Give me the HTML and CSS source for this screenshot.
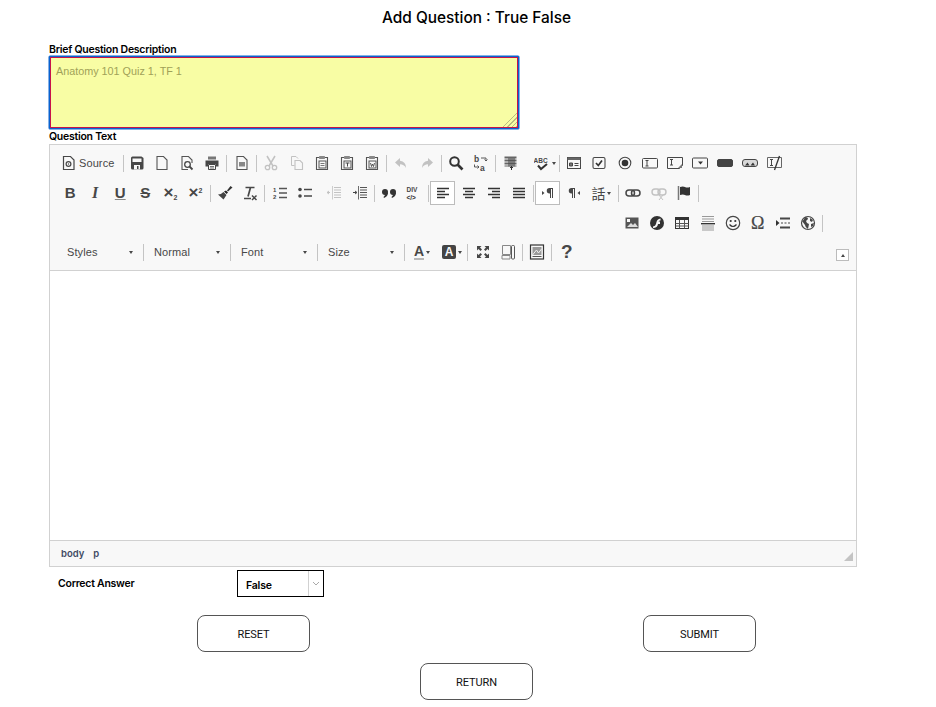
FILE: index.html
```html
<!DOCTYPE html>
<html lang="en">
<head>
<meta charset="utf-8">
<title>Add Question : True False</title>
<link rel="stylesheet" href="styles.css">
</head>
<body>
<svg class="defs" xmlns="http://www.w3.org/2000/svg">
<symbol id="source" viewBox="0 0 16 16"><path d="M2.500 1.500h7l3.500 3.500v9.500H2.500z" fill="none" stroke="#474747" stroke-width="1.200"/><circle cx="7.500" cy="9" r="2.400" fill="none" stroke="#474747" stroke-width="1.200"/><circle cx="7.500" cy="9" r=".7" fill="#474747"/></symbol>
<symbol id="save" viewBox="0 0 16 16"><path d="M2 3q0-1.500 1.500-1.500h9L14.500 3v10q0 1.500-1.500 1.500H3.500Q2 14.500 2 13z" fill="#474747"/><rect x="3.500" y="3.500" width="9" height="3.500" fill="#f8f8f8"/><rect x="5" y="10" width="6" height="4.500" fill="#f8f8f8"/><rect x="8" y="11" width="1.500" height="3" fill="#474747"/></symbol>
<symbol id="new" viewBox="0 0 16 16"><path d="M3 1.500h6.500L13 5v9.500H3z" fill="none" stroke="#555" stroke-width="1.100"/></symbol>
<symbol id="preview" viewBox="0 0 16 16"><path d="M9 14.500H3v-13h6.500L13 5v3" fill="none" stroke="#555" stroke-width="1.100"/><circle cx="8.500" cy="9.500" r="2.800" fill="none" stroke="#474747" stroke-width="1.300"/><path d="M10.500 11.500l3 3" stroke="#474747" stroke-width="1.800"/></symbol>
<symbol id="print" viewBox="0 0 16 16"><path d="M4 1.500h8v3H4z" fill="#777"/><path d="M1.500 5.500h13v6H12V9H4v2.500H1.500z" fill="#474747"/><path d="M4.500 9.500h7v5h-7z" fill="#f8f8f8" stroke="#474747"/><path d="M6 11.500h4M6 13h4" stroke="#777"/></symbol>
<symbol id="templates" viewBox="0 0 16 16"><path d="M3 1.500h6.500L13 5v9.500H3z" fill="none" stroke="#555" stroke-width="1.100"/><rect x="5" y="7" width="6" height="4.500" fill="#888"/></symbol>
<symbol id="cut" viewBox="0 0 16 16"><path d="M4 1l6 10M12 1L6 11" stroke="#474747" stroke-width="1.500"/><circle cx="4.500" cy="12.500" r="2.200" fill="none" stroke="#474747" stroke-width="1.300"/><circle cx="11.500" cy="12.500" r="2.200" fill="none" stroke="#474747" stroke-width="1.300"/></symbol>
<symbol id="copy" viewBox="0 0 16 16"><path d="M2.500 1.500H7l2 2M2.500 1.500v9h3" fill="none" stroke="#474747"/><path d="M6 5.500h5l2.500 2.500v6.500H6z" fill="none" stroke="#474747" stroke-width="1.100"/></symbol>
<symbol id="paste" viewBox="0 0 16 16"><path d="M5 2.500H2.500v12h11v-12H11" fill="none" stroke="#555" stroke-width="1.100"/><rect x="5" y="1" width="6" height="3" rx=".7" fill="#888"/><rect x="5" y="6" width="7" height="7" fill="none" stroke="#555"/><path d="M6.500 8.500h4M6.500 10.500h4" stroke="#777"/></symbol>
<symbol id="pastetext" viewBox="0 0 16 16"><path d="M5 2.500H2.500v12h11v-12H11" fill="none" stroke="#555" stroke-width="1.100"/><rect x="5" y="1" width="6" height="3" rx=".7" fill="#888"/><rect x="5" y="6" width="7" height="7" fill="none" stroke="#555"/><path d="M6.500 8h4M8.500 8v3.500" stroke="#474747"/></symbol>
<symbol id="pasteword" viewBox="0 0 16 16"><path d="M5 2.500H2.500v12h11v-12H11" fill="none" stroke="#555" stroke-width="1.100"/><rect x="5" y="1" width="6" height="3" rx=".7" fill="#888"/><rect x="5" y="6" width="7" height="7" fill="none" stroke="#555"/><path d="M6.500 8l1 3.500 1-2.500 1 2.500 1-3.500" fill="none" stroke="#474747" stroke-width=".9"/></symbol>
<symbol id="undo" viewBox="0 0 16 16"><path d="M7 3L2 7.500 7 12V9.300q4 0 6 3.700 0-6.500-6-7.200z" fill="#474747"/></symbol>
<symbol id="redo" viewBox="0 0 16 16"><path d="M9 3l5 4.500L9 12V9.300Q5 9.300 3 13q0-6.500 6-7.200z" fill="#474747"/></symbol>
<symbol id="find" viewBox="0 0 16 16"><circle cx="6.500" cy="6.500" r="4.300" fill="none" stroke="#333" stroke-width="2"/><path d="M9.500 9.500l5 5" stroke="#333" stroke-width="2.600"/></symbol>
<symbol id="replace" viewBox="0 0 16 16"><text x="1" y="7" class="svgt">b</text><text x="7" y="15.500" class="svgt">a</text><path d="M8 3h5v2.500M11.500 4.500l1.500 1.500 1.500-1.500M1.500 9.500v2.500h4M4.500 10.500l1.500 1.500-1.500 1.500" fill="none" stroke="#474747" stroke-width=".9"/></symbol>
<symbol id="selectall" viewBox="0 0 16 16"><path d="M1.500 1.500h12v2h-12zM1.500 4.500h12v2h-12zM1.500 7.500h12v2h-12zM1.500 10.500h12v1h-12z" fill="#666"/><path d="M5 3h7v8.500H5z" fill="#474747" opacity=".5"/><path d="M7 12.500h3M8.500 11v4" stroke="#333"/></symbol>
<symbol id="spell" viewBox="0 0 16 16"><text x="-.5" y="7.500" class="svgs">ABC</text><path d="M4 10.500l3 3.500 6-5" fill="none" stroke="#333" stroke-width="2"/></symbol>
<symbol id="form" viewBox="0 0 16 16"><rect x="1.500" y="2.500" width="13" height="11" fill="none" stroke="#474747"/><rect x="1.500" y="2.500" width="13" height="2.500" fill="#666"/><path d="M3.500 8h3v3h-3zM8.500 8.500h4M8.500 10.500h4" fill="#777" stroke="#474747"/></symbol>
<symbol id="checkbox" viewBox="0 0 16 16"><rect x="2" y="2.500" width="12" height="11" rx="1.500" fill="none" stroke="#474747" stroke-width="1.100"/><path d="M5 8l2.300 2.500L11 5.500" fill="none" stroke="#333" stroke-width="1.700"/></symbol>
<symbol id="radio" viewBox="0 0 16 16"><circle cx="8" cy="8" r="5.800" fill="none" stroke="#474747" stroke-width="1.100"/><circle cx="8" cy="8" r="3.300" fill="#333"/></symbol>
<symbol id="textfield" viewBox="0 0 16 16"><rect x=".5" y="3.500" width="15" height="9.500" rx="1" fill="none" stroke="#474747"/><path d="M3.500 5.500h3M3.500 11h3M5 5.500V11" stroke="#474747"/></symbol>
<symbol id="textarea" viewBox="0 0 16 16"><path d="M.5 2.500h15v8l-3 3H.5z" fill="none" stroke="#474747"/><path d="M3 4.500h3M3 10h3M4.500 4.500V10" stroke="#474747"/><path d="M11 13l4-4v4z" fill="#777"/></symbol>
<symbol id="select" viewBox="0 0 16 16"><rect x=".5" y="3" width="15" height="10" rx="1" fill="none" stroke="#474747"/><path d="M6 6.500h5L8.500 9.500z" fill="#333"/></symbol>
<symbol id="button" viewBox="0 0 16 16"><rect x=".5" y="4.500" width="15" height="7" rx="1.500" fill="#444" stroke="#444"/></symbol>
<symbol id="imagebutton" viewBox="0 0 16 16"><rect x=".5" y="4.500" width="15" height="7" rx="2.500" fill="#d8d8d8" stroke="#474747"/><path d="M3 10.500l2.500-3 2 3zM8.500 10.500l2.500-3 2 3z" fill="#333"/></symbol>
<symbol id="hidden" viewBox="0 0 16 16"><path d="M.5 2.500h14v10H.5z" fill="none" stroke="#666"/><path d="M3 4.500h3M3 10.500h3M4.500 4.500v6" stroke="#474747"/><path d="M12.500 1l-5 14" stroke="#333" stroke-width="1.300"/></symbol>
<symbol id="brush" viewBox="0 0 16 16"><path d="M10 5.500l3.500-4.500 2 1.500-4.500 4z" fill="#333"/><path d="M9 5.500l2 2-1.500 1.500L7 6.500z" fill="#222"/><path d="M6.500 7l3 3-3 4.500L1 9.500q3 0 5.500-2.500z" fill="#444"/></symbol>
<symbol id="removeformat" viewBox="0 0 16 16"><path d="M3.500 2.500h9M8.500 2.500l-2.500 9M2 13.500h7" stroke="#474747" stroke-width="1.700"/><path d="M10 10.500l4.500 4.500M14.500 10.500L10 15" stroke="#474747" stroke-width="1.500"/></symbol>
<symbol id="ol" viewBox="0 0 16 16"><path d="M7 3.500h8M7 8h8M7 12.500h8" stroke="#555" stroke-width="1.300"/><text x="1" y="7" class="svgn">1</text><text x="1" y="14" class="svgn">2</text></symbol>
<symbol id="ul" viewBox="0 0 16 16"><path d="M7 4.500h8M7 11h8" stroke="#474747" stroke-width="1.700"/><circle cx="3" cy="4.500" r="1.800" fill="#474747"/><circle cx="3" cy="11" r="1.800" fill="#474747"/></symbol>
<symbol id="outdent" viewBox="0 0 16 16"><path d="M8 2.500h7M8 5h7M8 7.500h7M8 10h7M8 12.500h7" stroke="#474747"/><path d="M6.500 1v13.500" stroke="#474747" stroke-width=".8"/><path d="M1 7.500h3M3 6l-2 1.500L3 9" fill="none" stroke="#474747"/></symbol>
<symbol id="indent" viewBox="0 0 16 16"><path d="M8 2.500h7M8 5h7M8 7.500h7M8 10h7M8 12.500h7" stroke="#555"/><path d="M6.500 1v13.500" stroke="#474747" stroke-width=".8"/><path d="M1 7.500h3.500M3 6l2 1.500L3 9" fill="none" stroke="#474747"/></symbol>
<symbol id="quote" viewBox="0 0 16 16"><circle cx="4" cy="7" r="3" fill="#333"/><circle cx="12" cy="7" r="3" fill="#333"/><path d="M7 7.500q0 4-4 5.500l-.5-1q1.500-1 1.500-3zM15 7.500q0 4-4 5.500l-.5-1q1.500-1 1.500-3z" fill="#333"/></symbol>
<symbol id="div" viewBox="0 0 16 16"><text x=".5" y="6.500" class="svgs">DIV</text><text x=".5" y="14.500" class="svgd">&lt;/&gt;</text></symbol>
<symbol id="left" viewBox="0 0 16 16"><path d="M2 3.500h12M2 6.500h8M2 9.500h12M2 12.500h8" stroke="#333" stroke-width="1.300"/></symbol>
<symbol id="center" viewBox="0 0 16 16"><path d="M2 3.500h12M4 6.500h8M2 9.500h12M4 12.500h8" stroke="#333" stroke-width="1.300"/></symbol>
<symbol id="right" viewBox="0 0 16 16"><path d="M2 3.500h12M6 6.500h8M2 9.500h12M6 12.500h8" stroke="#333" stroke-width="1.300"/></symbol>
<symbol id="justify" viewBox="0 0 16 16"><path d="M2 3.500h12M2 6.500h12M2 9.500h12M2 12.500h12" stroke="#333" stroke-width="1.400"/></symbol>
<symbol id="ltr" viewBox="0 0 16 16"><path d="M2 6l2.500 2L2 10z" fill="#474747"/><path d="M13 3H9.500a2.700 2.700 0 0 0 0 5.500H10V13h1V4h1v9h1z" fill="#474747"/></symbol>
<symbol id="rtl" viewBox="0 0 16 16"><path d="M14 6l-2.500 2 2.500 2z" fill="#474747"/><path d="M9 3H5.500a2.700 2.700 0 0 0 0 5.500H6V13h1V4h1v9h1z" fill="#474747"/></symbol>
<symbol id="link" viewBox="0 0 16 16"><rect x="1" y="5" width="8.500" height="6" rx="3" fill="none" stroke="#474747" stroke-width="1.500"/><rect x="6.500" y="5" width="8.500" height="6" rx="3" fill="none" stroke="#474747" stroke-width="1.500"/></symbol>
<symbol id="unlink" viewBox="0 0 16 16"><rect x="1" y="4" width="8" height="6" rx="3" fill="none" stroke="#474747" stroke-width="1.400"/><rect x="7" y="4" width="8" height="6" rx="3" fill="none" stroke="#474747" stroke-width="1.400"/><path d="M8 10l4 5M12 10l-4 5" stroke="#474747"/></symbol>
<symbol id="anchor" viewBox="0 0 16 16"><path d="M2.500 1v14" stroke="#777" stroke-width="1.500"/><path d="M4 2q3-1 5 0t5 0v8q-3 1-5 0t-5 0z" fill="#333"/></symbol>
<symbol id="image" viewBox="0 0 16 16"><path d="M1.500 2.500h13v11h-13z" fill="#555"/><rect x="3" y="4" width="3" height="3" fill="#f8f8f8"/><path d="M3 12l4-4 2 2 2-2 3 4z" fill="#ddd"/></symbol>
<symbol id="flash" viewBox="0 0 16 16"><circle cx="8" cy="8" r="7" fill="#333"/><path d="M11.500 3.500Q8 4 7.500 7l-.5 2Q6.500 11 4 11.500v1.500q4.500 0 5-4h2V6.500H9.500q.3-1 2-1z" fill="#f8f8f8"/></symbol>
<symbol id="table" viewBox="0 0 16 16"><rect x="1.500" y="2.500" width="13" height="11" fill="none" stroke="#333"/><rect x="1.500" y="2.500" width="13" height="2.500" fill="#333"/><path d="M1.500 8.500h13M1.500 11h13M5.500 5v8.500M10.500 5v8.500" stroke="#555"/></symbol>
<symbol id="hr" viewBox="0 0 16 16"><path d="M2 1.500h12M2 4h12M2 6.500h12M2 11h12M2 13h12M2 15h12" stroke="#999"/><path d="M1 8.700h14" stroke="#333" stroke-width="1.400"/></symbol>
<symbol id="smiley" viewBox="0 0 16 16"><circle cx="8" cy="8" r="6.700" fill="none" stroke="#474747" stroke-width="1.200"/><circle cx="5.700" cy="6" r="1.100" fill="#333"/><circle cx="10.300" cy="6" r="1.100" fill="#333"/><path d="M4.500 9.500q3.500 4 7 0" fill="none" stroke="#333" stroke-width="1.200"/></symbol>
<symbol id="pagebreak" viewBox="0 0 16 16"><path d="M1 5l3.500 3L1 11z" fill="#333"/><path d="M5 2.500h10v2H5zM5 11.500h10v2H5z" fill="#474747"/><path d="M6 8h2M9.500 8h2M13 8h2" stroke="#474747"/></symbol>
<symbol id="iframe" viewBox="0 0 16 16"><circle cx="8" cy="8" r="6.500" fill="none" stroke="#474747" stroke-width="1.200"/><path d="M2 6q2-1 3-4 3 0 3 2L6 6l1 2 2 1-1 5q-3-2-3-4zM10 3l3 2-1 2-2-1zM11 9l3-1-1 3-2 1z" fill="#474747"/></symbol>
<symbol id="maximize" viewBox="0 0 16 16"><path d="M2 2h4.500L5 3.500l2 2L5.500 7l-2-2L2 6.500zM14 2v4.500L12.500 5l-2 2L9 5.500l2-2L9.500 2zM2 14V9.500L3.500 11l2-2L7 10.500l-2 2L6.500 14zM14 14H9.500l1.500-1.500-2-2L10.500 9l2 2L14 9.500z" fill="#474747"/></symbol>
<symbol id="blocks" viewBox="0 0 16 16"><path d="M2.500 1.500h8v9h-8zM2 11.500h8v3.500H2z" fill="none" stroke="#888"/><rect x="11.500" y="1.500" width="3" height="13.500" rx="1" fill="none" stroke="#555"/></symbol>
<symbol id="docpreview" viewBox="0 0 16 16"><rect x="1.500" y="1" width="13" height="14" fill="none" stroke="#333" stroke-width="1.200"/><rect x="3.500" y="3" width="9" height="8" fill="#999"/><path d="M3.500 11l4-5 2 3 3-4" fill="none" stroke="#eee"/><path d="M3.500 12.500h9" stroke="#555"/></symbol>
</svg>

<main class="page">
  <h1 class="title">Add Question : True False</h1>
  <form class="form">
    <label class="label" for="brief">Brief Question Description</label>
    <textarea class="brief" id="brief" placeholder="Anatomy 101 Quiz 1, TF 1"></textarea>
    <div class="label label-q">Question Text</div>

    <section class="editor">
      <div class="toolbar">
        <div class="row">
          <span class="btn btn-source"><svg class="ic"><use href="#source"/></svg><span class="source-text">Source</span></span><i class="sep sep-first"></i>
          <span class="btn"><svg class="ic"><use href="#save"/></svg></span>
          <span class="btn"><svg class="ic"><use href="#new"/></svg></span>
          <span class="btn"><svg class="ic"><use href="#preview"/></svg></span>
          <span class="btn"><svg class="ic"><use href="#print"/></svg></span><i class="sep"></i>
          <span class="btn"><svg class="ic"><use href="#templates"/></svg></span><i class="sep"></i>
          <span class="btn off"><svg class="ic"><use href="#cut"/></svg></span>
          <span class="btn off"><svg class="ic"><use href="#copy"/></svg></span>
          <span class="btn"><svg class="ic"><use href="#paste"/></svg></span>
          <span class="btn"><svg class="ic"><use href="#pastetext"/></svg></span>
          <span class="btn"><svg class="ic"><use href="#pasteword"/></svg></span><i class="sep"></i>
          <span class="btn off"><svg class="ic"><use href="#undo"/></svg></span>
          <span class="btn off"><svg class="ic"><use href="#redo"/></svg></span><i class="sep"></i>
          <span class="btn"><svg class="ic"><use href="#find"/></svg></span>
          <span class="btn"><svg class="ic"><use href="#replace"/></svg></span><i class="sep"></i>
          <span class="btn"><svg class="ic"><use href="#selectall"/></svg></span><i class="sep sep-blank"></i>
          <span class="btn btn-spell"><svg class="ic"><use href="#spell"/></svg><b class="arrow"></b></span><i class="sep"></i>
          <span class="btn"><svg class="ic"><use href="#form"/></svg></span>
          <span class="btn"><svg class="ic"><use href="#checkbox"/></svg></span>
          <span class="btn"><svg class="ic"><use href="#radio"/></svg></span>
          <span class="btn"><svg class="ic"><use href="#textfield"/></svg></span>
          <span class="btn"><svg class="ic"><use href="#textarea"/></svg></span>
          <span class="btn"><svg class="ic"><use href="#select"/></svg></span>
          <span class="btn"><svg class="ic"><use href="#button"/></svg></span>
          <span class="btn"><svg class="ic"><use href="#imagebutton"/></svg></span>
          <span class="btn"><svg class="ic"><use href="#hidden"/></svg></span>
        </div>
        <div class="row">
          <span class="btn glyph g-b">B</span>
          <span class="btn glyph g-i">I</span>
          <span class="btn glyph g-u">U</span>
          <span class="btn glyph g-s">S</span>
          <span class="btn glyph g-x">×<sub>2</sub></span>
          <span class="btn glyph g-x">×<sup>2</sup></span><i class="sep"></i>
          <span class="btn"><svg class="ic"><use href="#brush"/></svg></span>
          <span class="btn"><svg class="ic"><use href="#removeformat"/></svg></span><i class="sep"></i>
          <span class="btn"><svg class="ic"><use href="#ol"/></svg></span>
          <span class="btn"><svg class="ic"><use href="#ul"/></svg></span><i class="sep sep-blank"></i>
          <span class="btn off"><svg class="ic"><use href="#outdent"/></svg></span>
          <span class="btn"><svg class="ic"><use href="#indent"/></svg></span><i class="sep"></i>
          <span class="btn"><svg class="ic"><use href="#quote"/></svg></span>
          <span class="btn"><svg class="ic"><use href="#div"/></svg></span><i class="sep"></i>
          <span class="btn on"><svg class="ic"><use href="#left"/></svg></span>
          <span class="btn"><svg class="ic"><use href="#center"/></svg></span>
          <span class="btn"><svg class="ic"><use href="#right"/></svg></span>
          <span class="btn"><svg class="ic"><use href="#justify"/></svg></span><i class="sep"></i>
          <span class="btn on"><svg class="ic"><use href="#ltr"/></svg></span>
          <span class="btn"><svg class="ic"><use href="#rtl"/></svg></span>
          <span class="btn btn-lang"><span class="g-lang">話</span><b class="arrow"></b></span><i class="sep"></i>
          <span class="btn"><svg class="ic"><use href="#link"/></svg></span>
          <span class="btn off"><svg class="ic"><use href="#unlink"/></svg></span>
          <span class="btn"><svg class="ic"><use href="#anchor"/></svg></span><i class="sep"></i>
        </div>
        <div class="row row-end">
          <span class="btn"><svg class="ic"><use href="#image"/></svg></span>
          <span class="btn"><svg class="ic"><use href="#flash"/></svg></span>
          <span class="btn"><svg class="ic"><use href="#table"/></svg></span>
          <span class="btn"><svg class="ic"><use href="#hr"/></svg></span>
          <span class="btn"><svg class="ic"><use href="#smiley"/></svg></span>
          <span class="btn glyph g-omega">Ω</span>
          <span class="btn"><svg class="ic"><use href="#pagebreak"/></svg></span>
          <span class="btn"><svg class="ic"><use href="#iframe"/></svg></span><i class="sep"></i>
        </div>
        <div class="row row-combos">
          <span class="combo">Styles<b class="arrow"></b></span><i class="sep sep-combo"></i>
          <span class="combo">Normal<b class="arrow"></b></span><i class="sep sep-combo"></i>
          <span class="combo">Font<b class="arrow"></b></span><i class="sep sep-combo"></i>
          <span class="combo">Size<b class="arrow"></b></span><i class="sep sep-combo"></i>
          <span class="btn btn-color glyph"><span class="g-a">A</span><b class="arrow"></b></span>
          <span class="btn btn-color glyph"><span class="g-bg">A</span><b class="arrow"></b></span><i class="sep"></i>
          <span class="btn"><svg class="ic"><use href="#maximize"/></svg></span>
          <span class="btn"><svg class="ic"><use href="#blocks"/></svg></span><i class="sep"></i>
          <span class="btn"><svg class="ic"><use href="#docpreview"/></svg></span><i class="sep"></i>
          <span class="btn glyph g-help">?</span>
          <span class="collapser"><b class="arrow arrow-up"></b></span>
        </div>
      </div>
      <div class="content"></div>
      <div class="status">
        <span class="crumb">body</span><span class="crumb">p</span>
        <span class="grip"></span>
      </div>
    </section>

    <div class="answer">
      <span class="answer-label">Correct Answer</span>
      <span class="select"><span class="select-value">False</span><span class="select-arrow"><svg class="chev" viewBox="0 0 8 5"><path d="M1 1l3 3 3-3" fill="none" stroke="#aaa"/></svg></span></span>
    </div>
    <div class="actions">
      <button type="button" class="action">RESET</button>
      <button type="button" class="action">SUBMIT</button>
    </div>
    <div class="actions actions-return">
      <button type="button" class="action">RETURN</button>
    </div>
  </form>
</main>
</body>
</html>
```
FILE: styles.css
```css
* { box-sizing: border-box; }
html, body { margin: 0; padding: 0; background: #fff; }
body { font-family: "Inter", "Liberation Sans", sans-serif; color: #000; overflow: hidden; }
.defs { display: none; }
.page { width: 936px; height: 707px; }
.title {
  margin: 0; height: 42px; padding: 8px 0 0 17px;
  text-align: center; font-size: 15.4px; line-height: 20px; font-weight: 500;
}
.form { display: flex; flex-direction: column; padding-left: 49px; }
.label {
  display: block; height: 14px; padding-top: 1px; font-size: 10.5px; line-height: 14px; font-weight: 600; letter-spacing: -.25px;
}
.label-q { height: 15px; line-height: 13px; }
.brief {
  display: block; width: 470px; height: 73px; margin: 0; padding: 7px 6px; resize: none;
  background-color: #f8fda4;
  background-image: linear-gradient(135deg, #f8fda4 50%, transparent 50%), repeating-linear-gradient(135deg, transparent 0 2px, #b9bc80 2px 3px);
  background-size: 15px 15px; background-position: right 1px bottom 1px; background-repeat: no-repeat;
  border: 1px solid #0a62cf; box-shadow: inset 0 0 0 1px #c8124a, 0 0 0 .5px #0a62cf;
  font-family: "Liberation Sans", sans-serif; font-size: 10.8px; line-height: 14px;
  outline: none; border-radius: 1px;
}
.brief::placeholder { color: #a0a158; opacity: 1; }

.editor { width: 808px; height: 423px; border: 1px solid #d1d1d1; background: #f8f8f8; display: flex; flex-direction: column; }
.toolbar { height: 126px; padding-top: 3px; border-bottom: 1px solid #d1d1d1; display: flex; flex-direction: column; }
.row { display: flex; align-items: center; height: 30px; padding-left: 7.5px; flex: none; }
.row-end { justify-content: flex-end; padding-right: 31px; }
.row-combos { margin-top: -1px; position: relative; }
.btn { flex: none; width: 25.1px; height: 24px; display: flex; align-items: center; justify-content: center; color: #474747; }
.ic { width: 16px; height: 16px; display: block; flex: none; }
.off .ic { opacity: .3; }
.on { background: #fff; border: 1px solid #bcbcbc; margin: 0 1px 0 -1px; }
.sep { flex: none; width: 1px; height: 17px; margin: 0 2px 0 1.5px; background: #c4c4c4; }
.sep-first { margin: 0 .8px 0 2.7px; }
.sep-blank { background: transparent; }
.sep-combo { margin: 0 1px 0 0; }
.svgt { font: 700 8.5px "Liberation Sans", sans-serif; fill: #474747; }
.svgs { font: 700 6.5px "Liberation Sans", sans-serif; fill: #474747; }
.svgd { font: 700 6.5px "Liberation Sans", sans-serif; fill: #333; }
.svgn { font: 700 6px "Liberation Sans", sans-serif; fill: #474747; }

.btn-source { width: 62.45px; justify-content: flex-start; padding-left: 3.5px; }
.source-text { margin-left: 2px; font: 11px/16px "Liberation Sans", sans-serif; color: #474747; letter-spacing: .1px; }
.btn-spell { width: 29.5px; justify-content: flex-start; padding-left: 6px; }
.btn-lang { width: 30px; justify-content: flex-start; padding-left: 5px; }
.g-lang { font: 400 14px/16px "Noto Sans CJK TC", sans-serif; color: #474747; }
.arrow { flex: none; display: block; width: 0; height: 0; margin-left: 2px; border-left: 2.5px solid transparent; border-right: 2.5px solid transparent; border-top: 3px solid #474747; }
.arrow-up { margin: 0; border-top: 0; border-bottom: 3px solid #474747; }

.glyph { font-family: "Liberation Sans", sans-serif; font-weight: 700; font-size: 15px; line-height: 16px; }
.g-i { font-family: "Liberation Serif", serif; font-style: italic; font-size: 16px; }
.g-u { text-decoration: underline; text-decoration-color: #888; }
.g-s { text-decoration: line-through; }
.g-x { font-size: 17px; font-weight: 700; }
.g-x sub { font-size: 7px; line-height: 7px; margin-top: 8px; }
.g-x sup { font-size: 7px; line-height: 7px; margin-top: -6px; }
.g-omega { font-family: "Liberation Serif", serif; font-size: 18px; font-weight: 400; -webkit-text-stroke: .2px #474747; }
.g-help { font-size: 19px; }
.btn-color { width: 30px; padding-left: 3px; }
.g-a { border-bottom: 2px solid #b8b8b8; line-height: 14px; font-size: 14px; }
.g-bg { background: #444; color: #f8f8f8; border-radius: 2px; width: 14px; height: 14px; font-size: 12px; line-height: 14px; text-align: center; }

.combo {
  flex: none; width: 85px; height: 24px; display: flex; align-items: center; justify-content: space-between;
  padding: 0 10px 0 9.5px; font: 11px/16px "Liberation Sans", sans-serif; color: #474747; letter-spacing: .1px;
}
.combo .arrow { margin: 0; }
.collapser {
  position: absolute; right: 7px; top: 12px; width: 13px; height: 12px;
  display: flex; align-items: center; justify-content: center;
  border: 1px solid #bcbcbc; background: #fff;
}

.content { flex: 1; background: #fff; }
.status { height: 26px; border-top: 1px solid #d1d1d1; padding: 0 0 0 11px; display: flex; align-items: center; gap: 9px; position: relative; background: #f8f8f8; }
.crumb { font-size: 9.5px; font-weight: 600; color: #3f4a63; line-height: 14px; }
.grip { position: absolute; right: 3px; bottom: 5px; width: 0; height: 0; border-left: 9px solid transparent; border-bottom: 9px solid #c4c4c4; }

.answer { display: flex; align-items: center; height: 27px; margin-top: 3px; padding-left: 9px; }
.answer-label { width: 179px; padding-top: 1px; font-size: 10.5px; font-weight: 600; line-height: 14px; letter-spacing: -.25px; }
.select { width: 87px; height: 27px; display: flex; border: 1px solid #000; background: #fff; }
.select-value { flex: 1; padding: 8px 0 0 8px; font-size: 10.5px; font-weight: 600; line-height: 14px; letter-spacing: -.2px; }
.select-arrow { width: 15px; border-left: 1px solid #d1d1d1; display: flex; align-items: center; justify-content: center; }
.chev { width: 8px; height: 5px; display: block; }

.actions { display: flex; justify-content: center; gap: 333px; margin: 18px 0 0 -49px; padding-left: 17px; }
.actions-return { margin-top: 11px; }
.action {
  width: 113px; height: 37px; padding: 2px 0 0; background: #fff; border: 1px solid #555; border-radius: 8px;
  font-family: "Roboto", sans-serif; font-size: 11px; color: #111; text-align: center; letter-spacing: -.1px;
}
```
